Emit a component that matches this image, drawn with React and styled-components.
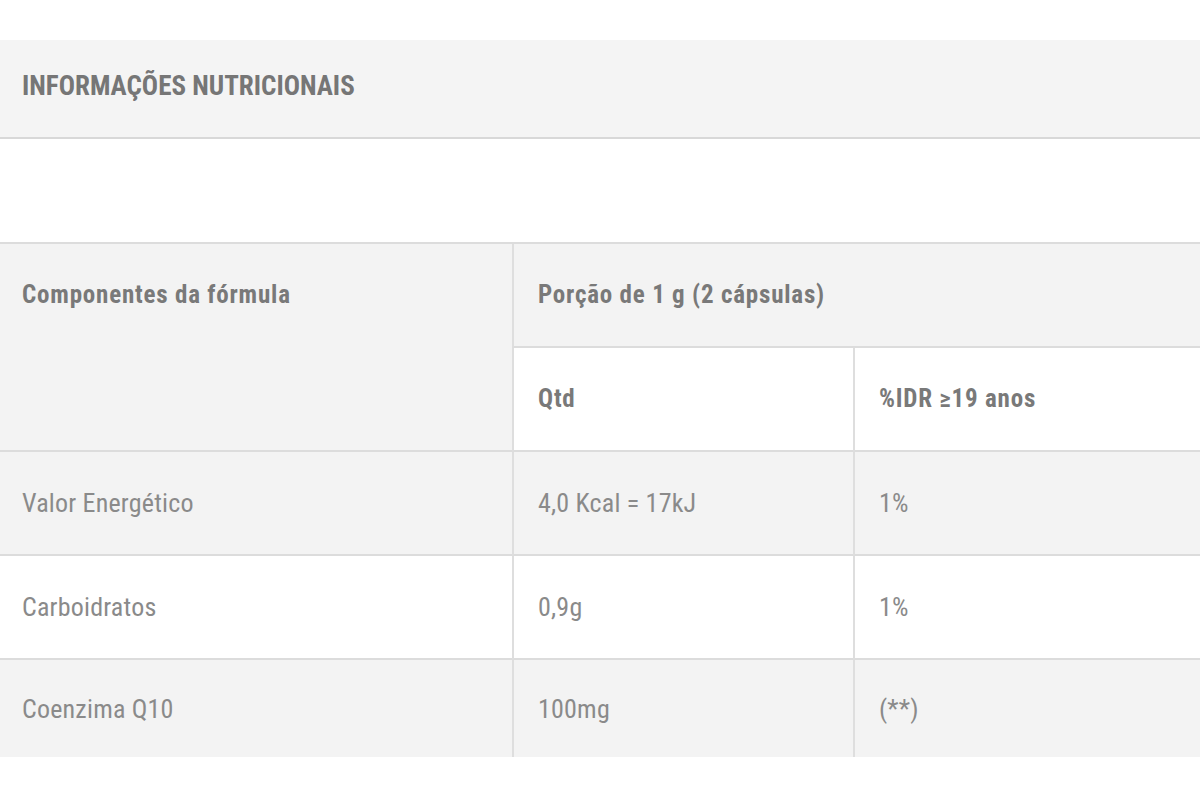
import React from "react";
import styled, { createGlobalStyle } from "styled-components";

const Global = createGlobalStyle`
  * { box-sizing: border-box; }
  html, body { margin: 0; padding: 0; background: #ffffff; }
  body { font-family: Roboto, "Liberation Sans", Arial, sans-serif; }
`;

const Page = styled.div`
  padding-top: 40px;
  width: 1200px;
`;

const TitleBar = styled.div`
  height: 99px;
  display: flex;
  align-items: center;
  padding: 0 22px 6px;
  background: #f4f4f4;
  border-bottom: 2px solid #d8d8d8;
`;

const Title = styled.h2`
  margin: 0;
  font-family: Roboto, "Liberation Sans", sans-serif;
  font-stretch: 82%;
  font-size: 27px;
  font-weight: 700;
  color: #767676;
`;

const Spacer = styled.div`
  height: 103px;
`;

const Table = styled.table`
  width: 100%;
  table-layout: fixed;
  border-collapse: separate;
  border-spacing: 0;
  border-top: 2px solid #dcdcdc;
`;

const Col = styled.col`
  width: ${(p) => (p.$w ? `${p.$w}px` : "auto")};
`;

const cellBase = (p) => `
  height: ${p.$last ? "97px" : "104px"};
  padding: ${p.$top ? "36px" : "0"} ${p.$first ? "22px" : "24px"} 0;
  vertical-align: ${p.$top ? "top" : "middle"};
  text-align: left;
  background: ${p.$shade ? "#f3f3f3" : "#ffffff"};
  border-bottom: ${p.$last ? "0" : "2px solid #dcdcdc"};
  border-left: ${p.$first ? "0" : "2px solid #dedede"};
  font-family: Roboto, "Liberation Sans", sans-serif;
  font-stretch: 82%;
  line-height: 30px;
  white-space: nowrap;
`;

const HeadCell = styled.th`
  ${(p) => cellBase(p)}
  font-size: 25px;
  font-weight: 700;
  letter-spacing: 0.8px;
  color: #797979;
`;

const DataCell = styled.td`
  ${(p) => cellBase(p)}
  font-size: 26px;
  font-weight: 400;
  letter-spacing: 0.2px;
  color: #8a8a8a;
`;

const rows = [
  { name: "Valor Energético", qtd: "4,0 Kcal = 17kJ", idr: "1%", shade: true },
  { name: "Carboidratos", qtd: "0,9g", idr: "1%", shade: false },
  { name: "Coenzima Q10", qtd: "100mg", idr: "(**)", shade: true },
];

export default function App() {
  return (
    <Page>
      <Global />
      <TitleBar>
        <Title>INFORMAÇÕES NUTRICIONAIS</Title>
      </TitleBar>
      <Spacer />
      <Table>
        <colgroup>
          <Col $w={512} />
          <Col $w={341} />
          <Col />
        </colgroup>
        <thead>
          <tr>
            <HeadCell rowSpan={2} $first $top $shade>
              Componentes da fórmula
            </HeadCell>
            <HeadCell colSpan={2} $shade>
              Porção de 1 g (2 cápsulas)
            </HeadCell>
          </tr>
          <tr>
            <HeadCell>Qtd</HeadCell>
            <HeadCell>%IDR ≥19 anos</HeadCell>
          </tr>
        </thead>
        <tbody>
          {rows.map((r, i) => {
            const last = i === rows.length - 1;
            return (
              <tr key={r.name}>
                <DataCell $first $shade={r.shade} $last={last}>{r.name}</DataCell>
                <DataCell $shade={r.shade} $last={last}>{r.qtd}</DataCell>
                <DataCell $shade={r.shade} $last={last}>{r.idr}</DataCell>
              </tr>
            );
          })}
        </tbody>
      </Table>
    </Page>
  );
}
